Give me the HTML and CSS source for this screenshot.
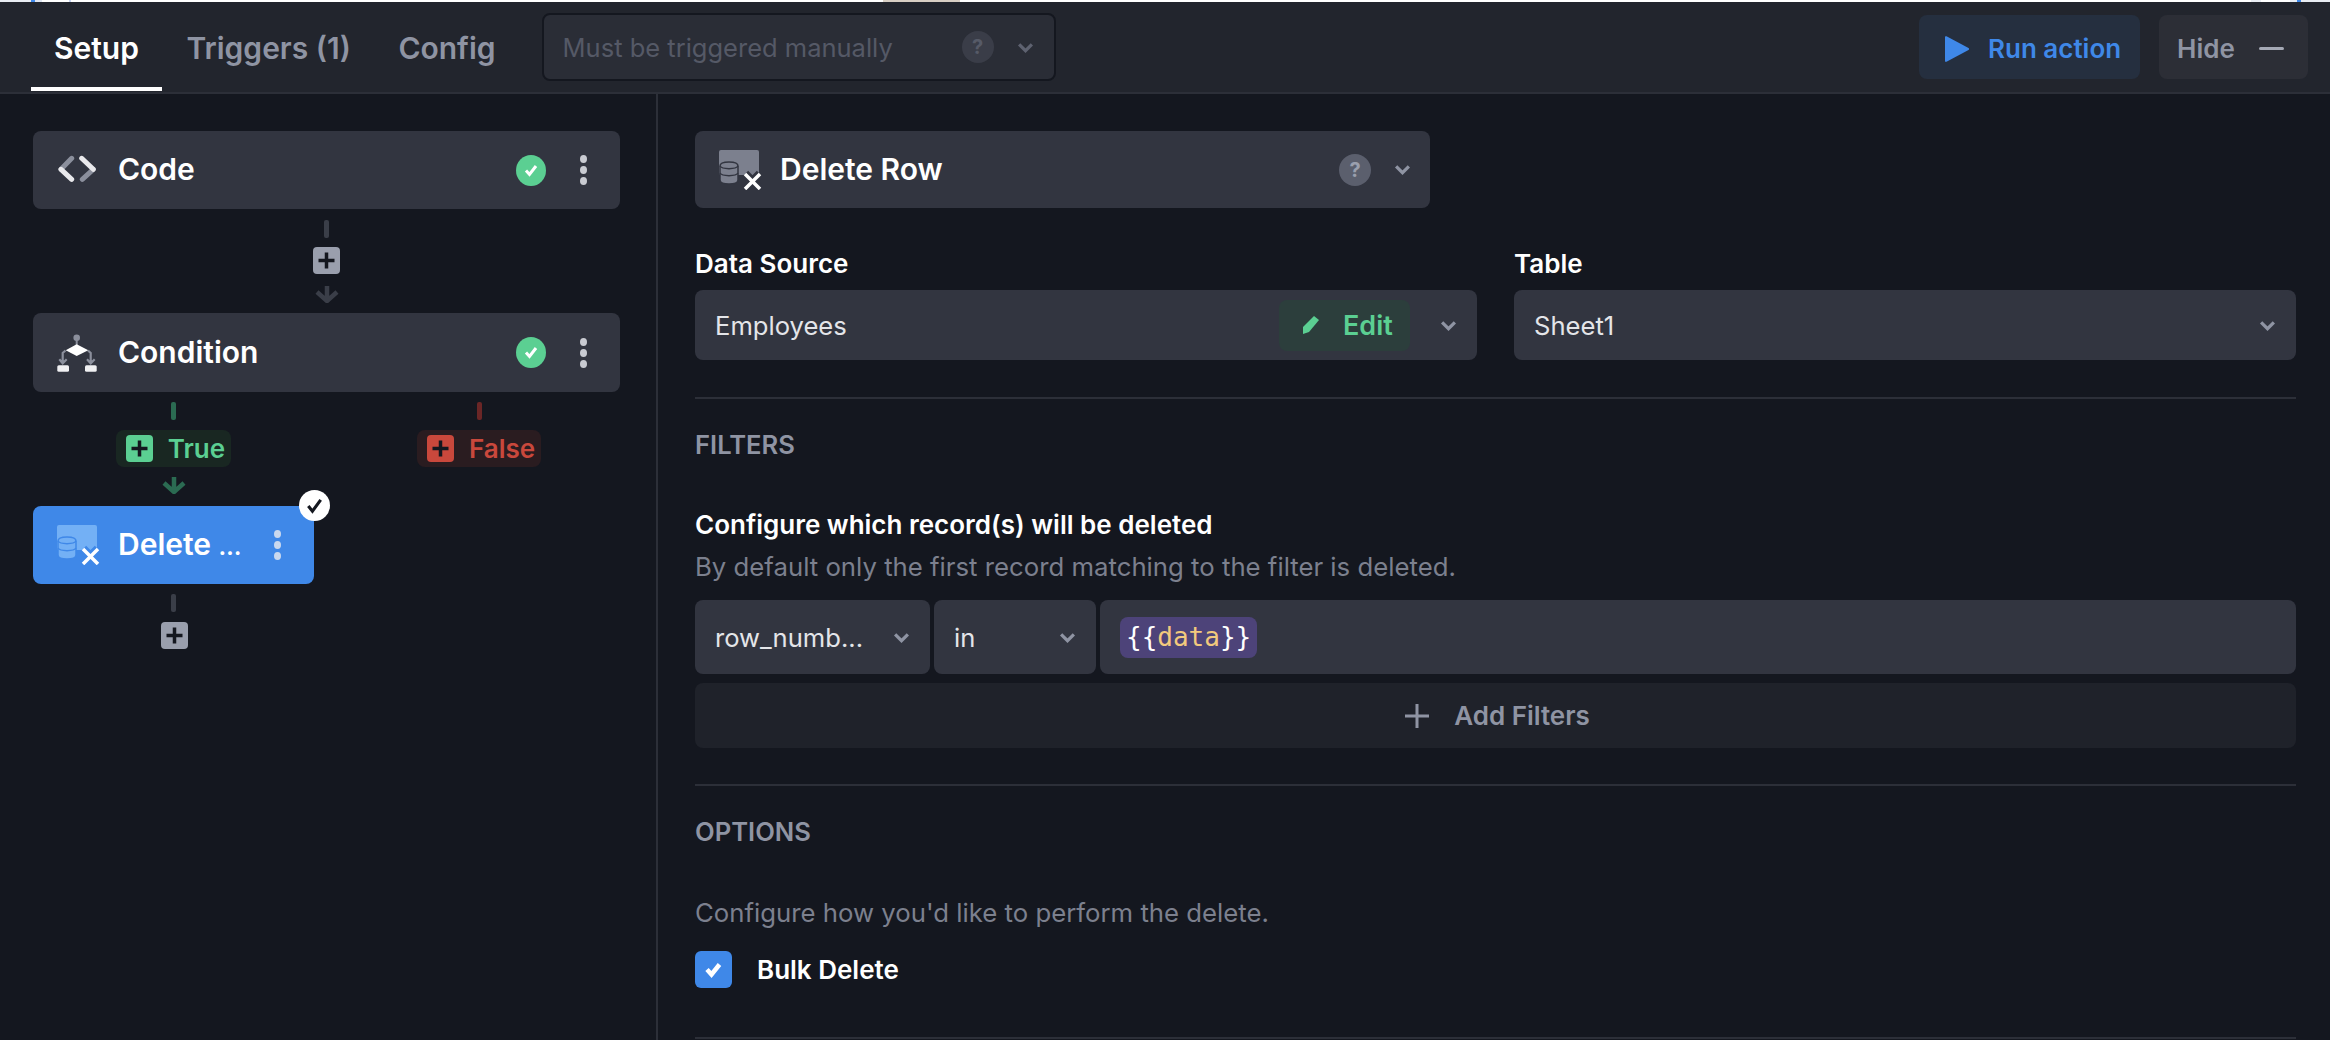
FILE: index.html
```html
<!DOCTYPE html>
<html lang="en">
<head>
  <meta charset="UTF-8" />
  <title>Delete Row</title>
  <link rel="stylesheet" href="styles.css">
</head>
<body>
  <div class="topstrip"></div>
  <header class="topbar">
    <nav class="tabs">
      <a class="tab active">Setup</a>
      <a class="tab">Triggers (1)</a>
      <a class="tab">Config</a>
    </nav>
    <div class="trigger-select">
      <span class="trigger-text">Must be triggered manually</span>
      <span class="help dim">?</span>
      <svg class="chev dim-chev" viewBox="0 0 16 10"><path d="M2 2l6 6 6-6" /></svg>
    </div>
    <div class="actions">
      <button class="btn run">
        <svg class="play" viewBox="0 0 24 26"><path d="M0 1v24c0 1 1 1 1.500.700L23.500 14c.700-.500.700-1.500 0-2L1.500.300C1 0 0 0 0 1z" /></svg>
        Run action
      </button>
      <button class="btn hide">Hide <span class="minus"></span></button>
    </div>
  </header>

  <main class="main">
    <aside class="flow">
      <div class="card">
        <svg class="step-icon" viewBox="0 0 38 30">
          <path class="code-grey" d="M13.700 3.300L3 14.300M35.300 14.300L24.300 24.300" />
          <path class="code-white" d="M3 14.300l10.700 10M23.700 3.300l11.600 11" />
        </svg>
        <span class="card-name">Code</span>
        <span class="ok"><svg viewBox="0 0 30 30"><path d="M10 15.500l3.500 4 6.500-8.500" /></svg></span>
        <span class="kebab"><i></i><i></i><i></i></span>
      </div>

      <div class="link">
        <span class="stem"></span>
        <span class="plus"><svg viewBox="0 0 27 27"><path d="M5.500 13.500h16M13.500 5.500v16" /></svg></span>
        <svg class="arrow" viewBox="0 0 24 18"><path d="M12 1v15M2 7l10 9 10-9" /></svg>
      </div>

      <div class="card cond">
        <svg class="step-icon tall" viewBox="0 0 40 38">
          <circle cx="19.700" cy="3.700" r="3.300" fill="#8b8f9c" />
          <path d="M19.700 6v5" stroke="#8b8f9c" stroke-width="2" />
          <path d="M19.700 10.300l11.600 6-11.600 5.700-11-5.700z" fill="#fff" />
          <path d="M8.500 16.500L5.700 19v10M2.300 25.300l3.400 4 4-4M31 16.500l2.700 2.500v10M30 25.300l3.700 4 4-4" fill="none" stroke="#8b8f9c" stroke-width="2.200" />
          <rect x="0.300" y="31.300" width="11.700" height="6.400" rx="1.500" fill="#f0f0f2" />
          <rect x="28" y="31.300" width="11.700" height="6.400" rx="1.500" fill="#f0f0f2" />
        </svg>
        <span class="card-name">Condition</span>
        <span class="ok"><svg viewBox="0 0 30 30"><path d="M10 15.500l3.500 4 6.500-8.500" /></svg></span>
        <span class="kebab"><i></i><i></i><i></i></span>
      </div>

      <div class="branches">
        <div class="branch true">
          <span class="stem"></span>
          <span class="pill"><span class="plus"><svg viewBox="0 0 27 27"><path d="M5.500 13.500h16M13.500 5.500v16" /></svg></span>True</span>
          <svg class="arrow" viewBox="0 0 24 18"><path d="M12 1v15M2 7l10 9 10-9" /></svg>
          <div class="card selected">
            <svg class="step-icon db db-blue" viewBox="0 0 43 40">
              <rect class="db-sheet" width="40" height="25" rx="2" />
              <path class="db-stack" d="M1 16c0-2.500 4-4 9-4s9 1.500 9 4v14c0 2.500-4 4-9 4s-9-1.500-9-4z" />
              <path class="db-lines" d="M1 16c2 3.500 16 3.500 18 0M1 23c2 3.500 16 3.500 18 0" />
              <path class="db-halo" d="M26 24l15 15M41 24L26 39" />
              <path class="db-x" d="M26 24l15 15M41 24L26 39" />
            </svg>
            <span class="card-name">Delete <span class="dots">…</span></span>
            <span class="kebab"><i></i><i></i><i></i></span>
            <span class="badge"><svg viewBox="0 0 30 30"><path d="M9 15.500l4 5 8-11" /></svg></span>
          </div>
          <span class="stem grey"></span>
          <span class="plus last"><svg viewBox="0 0 27 27"><path d="M5.500 13.500h16M13.500 5.500v16" /></svg></span>
        </div>
        <div class="branch false">
          <span class="stem"></span>
          <span class="pill"><span class="plus"><svg viewBox="0 0 27 27"><path d="M5.500 13.500h16M13.500 5.500v16" /></svg></span>False</span>
        </div>
      </div>
    </aside>

    <section class="panel">
      <div class="action-select">
        <svg class="step-icon db db-grey" viewBox="0 0 43 40">
          <rect class="db-sheet" width="40" height="25" rx="2" />
          <path class="db-stack" d="M1 16c0-2.500 4-4 9-4s9 1.500 9 4v14c0 2.500-4 4-9 4s-9-1.500-9-4z" />
          <path class="db-lines" d="M1 16c2 3.500 16 3.500 18 0M1 23c2 3.500 16 3.500 18 0" />
          <path class="db-halo" d="M26 24l15 15M41 24L26 39" />
          <path class="db-x" d="M26 24l15 15M41 24L26 39" />
        </svg>
        <span class="action-name">Delete Row</span>
        <span class="help">?</span>
        <svg class="chev" viewBox="0 0 16 10"><path d="M2 2l6 6 6-6" /></svg>
      </div>

      <div class="fields">
        <div class="field">
          <label class="label">Data Source</label>
          <div class="input ds">
            <span class="grow">Employees</span>
            <span class="edit">
              <svg class="pencil" viewBox="0 0 20 20"><path d="M13 1l5 4-10 12-6 2 0-7z" /></svg>
              Edit
            </span>
            <svg class="chev" viewBox="0 0 16 10"><path d="M2 2l6 6 6-6" /></svg>
          </div>
        </div>
        <div class="field">
          <label class="label">Table</label>
          <div class="input">
            <span class="grow">Sheet1</span>
            <svg class="chev" viewBox="0 0 16 10"><path d="M2 2l6 6 6-6" /></svg>
          </div>
        </div>
      </div>

      <hr class="rule rule-one">
      <h2 class="section-title filters-title">FILTERS</h2>
      <h3 class="heading">Configure which record(s) will be deleted</h3>
      <p class="hint hint-one">By default only the first record matching to the filter is deleted.</p>

      <div class="filter-row">
        <div class="input col-key"><span class="grow">row_numb...</span><svg class="chev" viewBox="0 0 16 10"><path d="M2 2l6 6 6-6" /></svg></div>
        <div class="input col-op"><span class="grow">in</span><svg class="chev" viewBox="0 0 16 10"><path d="M2 2l6 6 6-6" /></svg></div>
        <div class="input col-val"><span class="chip">{{<span class="chip-var">data</span>}}</span></div>
      </div>
      <div class="add-filters">
        <svg class="add-plus" viewBox="0 0 26 26"><path d="M13 1v24M1 13h24" /></svg>
        Add Filters
      </div>

      <hr class="rule rule-two">
      <h2 class="section-title options-title">OPTIONS</h2>
      <p class="hint hint-two">Configure how you'd like to perform the delete.</p>
      <div class="check-row">
        <span class="checkbox"><svg viewBox="0 0 37 37"><path d="M12 18.500l4.500 5 8-10" /></svg></span>
        <span class="check-label">Bulk Delete</span>
      </div>
      <hr class="rule rule-three">
    </section>
  </main>
</body>
</html>
```
FILE: styles.css
```css
* {
  box-sizing: border-box;
}

html, body {
  margin: 0;
  height: 1040px;
  overflow: hidden;
}

body {
  font-family: Inter, "Liberation Sans", sans-serif;
  background-color: #14171f;
  color: #fff;
}

svg {
  display: block;
}

/* sliver of the page above the panel */
.topstrip {
  height: 2px;
  background: linear-gradient(90deg,
    #e9edf3 0 31px, #3f88e8 31px 35px, #dfe6f2 35px 42px, #fff 42px 69px,
    #c8d4f0 69px 71px, #fff 71px 883px, #d8cfc4 883px 960px, #fff 960px 2251px,
    #e9edf3 2251px 2261px, #fff 2261px 2290px, #e9edf3 2290px 2297px,
    #3f88e8 2297px 2301px, #e9edf3 2301px);
}

/* header */
.topbar {
  display: flex;
  align-items: center;
  height: 92px;
  padding: 0 22px 0 31px;
  background-color: #22252d;
  border-bottom: 2px solid #2c2f38;
}

.tabs {
  display: flex;
  align-self: flex-start;
  gap: 1.500px;
}

.tab {
  display: flex;
  align-items: center;
  height: 89px;
  padding: 6px 23px 0;
  font-size: 30px;
  font-weight: 600;
  color: #8f94a3;
  border-bottom: 4px solid transparent;
}

.tab.active {
  color: #fff;
  border-bottom-color: #fff;
}

.trigger-select {
  display: flex;
  align-items: center;
  width: 514px;
  height: 68px;
  margin-left: 23px;
  padding: 0 20px 0 19px;
  background-color: #2a2d36;
  border: 2px solid #14171f;
  border-radius: 8px;
}

.trigger-text {
  flex: 1;
  font-size: 25.500px;
  color: #555966;
}

.help {
  display: flex;
  align-items: center;
  justify-content: center;
  width: 32px;
  height: 32px;
  border-radius: 50%;
  background-color: #5b5f6d;
  color: #9a9fad;
  font-size: 20px;
  font-weight: 700;
}

.help.dim {
  background-color: #3a3d48;
  color: #565a67;
}

.chev {
  flex: none;
  width: 17px;
  height: 11px;
  margin-left: 23px;
  fill: none;
  stroke: #8f94a3;
  stroke-width: 3;
}

.dim-chev {
  stroke: #5e6270;
}

.actions {
  display: flex;
  gap: 19px;
  margin-left: auto;
}

.btn {
  display: flex;
  align-items: center;
  height: 64px;
  padding-top: 4px;
  border: none;
  border-radius: 8px;
  font-family: inherit;
  font-size: 26px;
  font-weight: 600;
}

.run {
  width: 221px;
  padding-left: 26px;
  background-color: #252f3f;
  color: #3f88e8;
}

.play {
  width: 24px;
  height: 26px;
  margin-right: 19px;
  fill: #3f88e8;
}

.hide {
  width: 149px;
  padding-left: 18px;
  background-color: #2c2e36;
  color: #8f94a3;
}

.minus {
  width: 25px;
  height: 3px;
  margin-left: 24px;
  border-radius: 2px;
  background-color: #a5a9b5;
}

/* layout */
.main {
  display: flex;
  height: 946px;
}

.flow {
  flex: none;
  width: 658px;
  padding: 37px 0 0 33px;
  border-right: 2px solid #2c2f38;
}

.card {
  position: relative;
  display: flex;
  align-items: center;
  width: 587px;
  height: 78px;
  padding: 0 33px 0 25px;
  border-radius: 8px;
  background-color: #323540;
}

.card.cond {
  height: 79px;
}

.step-icon {
  flex: none;
  width: 38px;
  height: 30px;
  margin-right: 22px;
  fill: none;
}

.step-icon.tall {
  width: 40px;
  height: 38px;
  margin-left: -1px;
  margin-right: 21px;
}

.step-icon.db {
  width: 43px;
  height: 40px;
  margin-right: 18px;
}

.code-grey, .code-white {
  stroke-width: 5;
  stroke-linecap: round;
}

.code-grey {
  stroke: #8b8f9c;
}

.code-white {
  stroke: #e9e9ec;
}

.db-lines, .db-stack {
  stroke-width: 1.500;
}

.db-blue .db-sheet, .db-blue .db-stack {
  fill: #73b0f5;
}

.db-blue .db-stack, .db-blue .db-lines, .db-blue .db-halo {
  stroke: #3f88e8;
}

.db-grey .db-sheet, .db-grey .db-stack {
  fill: #7c808e;
}

.db-grey .db-stack, .db-grey .db-lines, .db-grey .db-halo {
  stroke: #323540;
}

.db-lines {
  fill: none;
}

.db-halo {
  fill: none;
  stroke-width: 9;
}

.db-x {
  fill: none;
  stroke: #fff;
  stroke-width: 3.500;
}

.card-name, .action-name {
  flex: 1;
  padding-bottom: 2px;
  font-size: 30px;
  font-weight: 600;
  white-space: nowrap;
}

.dots {
  font-size: 24px;
}

.ok {
  width: 30px;
  height: 31px;
  margin-right: 34px;
  border-radius: 50%;
  background-color: #5bcf92;
}

.ok path, .badge path {
  fill: none;
  stroke: #fff;
  stroke-width: 3;
}

.kebab {
  display: flex;
  flex-direction: column;
  gap: 3px;
}

.kebab i {
  width: 7px;
  height: 8px;
  border-radius: 50%;
  background-color: #c9cbd2;
}

/* connectors */
.link {
  display: flex;
  flex-direction: column;
  align-items: center;
  width: 587px;
  height: 104px;
  padding-top: 11px;
}

.stem {
  width: 5px;
  height: 18px;
  border-radius: 2px;
  background-color: #3a3e48;
}

.plus {
  flex: none;
  width: 27px;
  height: 27px;
  border-radius: 4px;
  background-color: #9a9fad;
}

.plus path {
  fill: none;
  stroke: #14171f;
  stroke-width: 3.500;
}

.link .plus {
  margin-top: 9px;
}

.arrow {
  width: 24px;
  height: 18px;
  margin-top: 11px;
  fill: none;
  stroke: #3a3e48;
  stroke-width: 4.500;
}

.branches {
  display: flex;
}

.branch {
  display: flex;
  flex-direction: column;
  align-items: center;
  padding-top: 10px;
}

.branch.true {
  width: 281px;
}

.branch.false {
  width: 306px;
  padding-right: 24px;
  padding-left: 48px;
}

.pill {
  display: flex;
  align-items: center;
  height: 37px;
  margin-top: 10px;
  padding: 0 6px 0 10px;
  border-radius: 8px;
  font-size: 26px;
  font-weight: 600;
}

.pill .plus {
  margin-right: 15px;
}

.true .stem {
  background-color: #2b6b52;
}

.true .pill {
  background-color: #192722;
  color: #5bcf92;
}

.true .pill .plus {
  background-color: #5bcf92;
}

.true .arrow {
  margin-top: 9px;
  stroke: #2b6b52;
}

.false .stem {
  background-color: #6b2626;
}

.false .pill {
  background-color: #2a1c20;
  color: #c9483c;
}

.false .pill .plus {
  background-color: #c9483c;
}

.card.selected {
  flex: none;
  width: 281px;
  margin-top: 12px;
  background-color: #3f88e8;
  padding: 0 33px 0 24px;
}

.selected .step-icon {
  margin-right: 18px;
}

.selected .kebab i {
  background-color: #c9d8ee;
}

.badge {
  position: absolute;
  top: -16px;
  right: -16px;
  width: 31px;
  height: 31px;
  border-radius: 50%;
  background-color: #fff;
}

.badge path {
  stroke: #14171f;
}

.stem.grey {
  margin-top: 10px;
  background-color: #3a3e48;
}

.plus.last {
  margin-top: 10px;
  margin-left: 2px;
}

/* right panel */
.panel {
  flex: 1;
  padding: 37px 34px 0 37px;
}

.action-select {
  display: flex;
  align-items: center;
  width: 735px;
  height: 77px;
  padding: 0 19px 0 24px;
  border-radius: 8px;
  background-color: #323540;
}

.fields {
  display: flex;
  gap: 37px;
  margin-top: 41px;
}

.field {
  flex: 1;
}

.field:first-child {
  flex: none;
  width: 782px;
}

.label {
  display: block;
  height: 41px;
  font-size: 26px;
  font-weight: 600;
  line-height: 30px;
}

.input {
  display: flex;
  align-items: center;
  height: 70px;
  padding: 0 20px;
  border-radius: 8px;
  background-color: #323540;
  font-size: 25.600px;
  color: #e4e5e9;
}

.grow {
  flex: 1;
  white-space: nowrap;
}

.edit {
  display: flex;
  align-items: center;
  width: 131px;
  height: 51px;
  padding-left: 22px;
  border-radius: 8px;
  background-color: #2c3e3c;
  color: #5bcf92;
  font-size: 27px;
  font-weight: 600;
}

.ds .chev {
  margin-left: 30px;
}

.pencil {
  width: 20px;
  height: 20px;
  margin-right: 22px;
  fill: #5bcf92;
}

.rule {
  height: 2px;
  margin: 0;
  border: none;
  background-color: #2c2f38;
}

.rule-one {
  margin-top: 37px;
}

.section-title {
  margin: 0;
  font-size: 25.600px;
  font-weight: 600;
  line-height: 32px;
  color: #8f94a3;
}

.filters-title {
  margin-top: 30px;
}

.heading {
  margin: 48px 0 0;
  font-size: 26px;
  font-weight: 600;
  line-height: 32px;
}

.hint {
  margin: 0;
  font-size: 25.750px;
  line-height: 32px;
  color: #7c808e;
}

.hint-one {
  margin-top: 10px;
}

.filter-row {
  display: flex;
  gap: 4px;
  margin-top: 17px;
}

.filter-row .input {
  height: 74px;
  padding-right: 20px;
}

.filter-row .chev {
  margin-left: 12px;
}

.col-key {
  flex: none;
  width: 235px;
}

.col-op {
  flex: none;
  width: 162px;
}

.col-val {
  flex: 1;
}

.chip {
  padding: 4px 6px;
  border-radius: 8px;
  background-color: #4d4379;
  font-family: "DejaVu Sans Mono", monospace;
  font-size: 26px;
  line-height: 33px;
  color: #fff;
}

.chip-var {
  color: #f2c97d;
}

.add-filters {
  display: flex;
  align-items: center;
  justify-content: center;
  height: 65px;
  margin-top: 9px;
  padding-left: 3px;
  border-radius: 8px;
  background-color: #1f222a;
  color: #8f94a3;
  font-size: 26px;
  font-weight: 600;
}

.add-plus {
  width: 26px;
  height: 26px;
  margin-right: 24px;
  fill: none;
  stroke: #8f94a3;
  stroke-width: 3;
}

.rule-two {
  margin-top: 36px;
}

.options-title {
  margin-top: 30px;
}

.hint-two {
  margin-top: 49px;
}

.check-row {
  display: flex;
  align-items: center;
  margin-top: 22px;
}

.checkbox {
  width: 37px;
  height: 37px;
  margin-right: 25px;
  border-radius: 6px;
  background-color: #3f88e8;
}

.checkbox path {
  fill: none;
  stroke: #fff;
  stroke-width: 4.500;
}

.check-label {
  font-size: 26px;
  font-weight: 600;
}

.rule-three {
  margin-top: 49px;
}
```
